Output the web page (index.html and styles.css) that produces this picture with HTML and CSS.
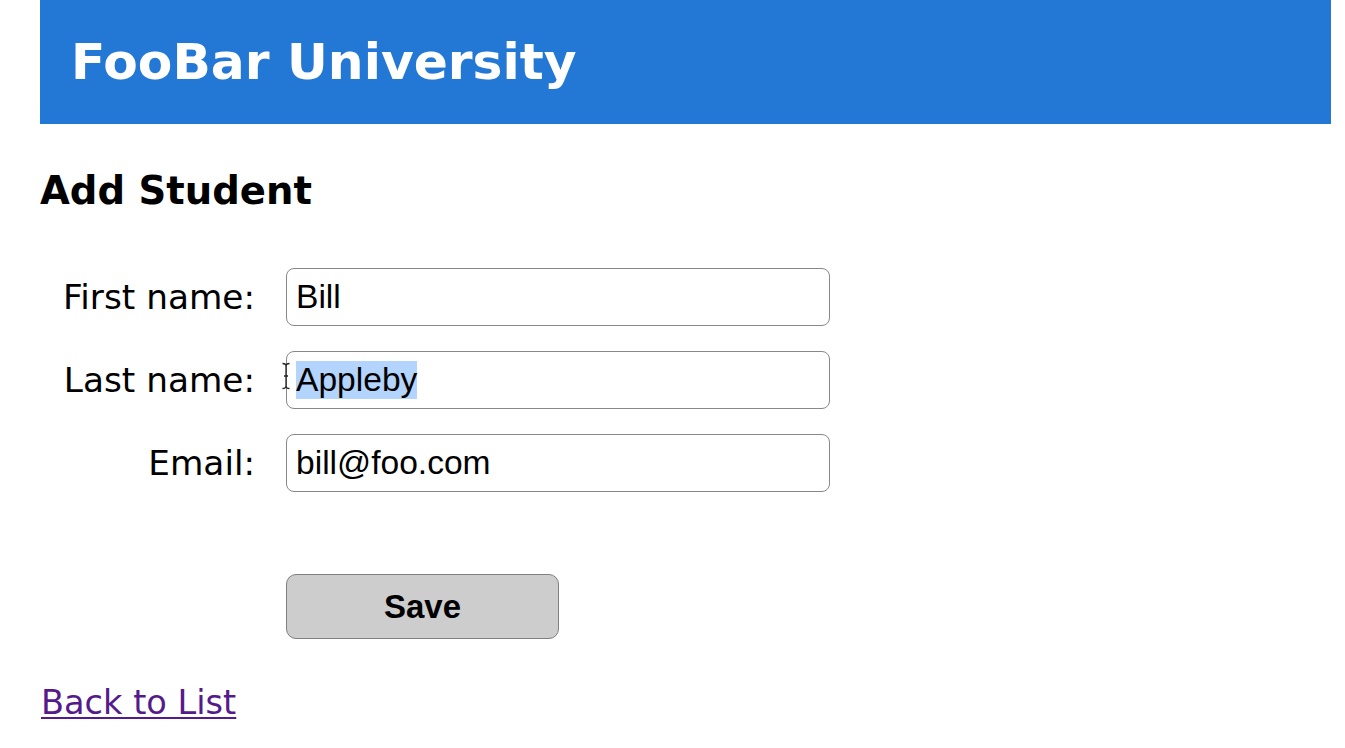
FILE: index.html
```html
<!DOCTYPE html>
<html lang="en">
<head>
<meta charset="utf-8">
<title>Add Student - FooBar University</title>
<link rel="stylesheet" href="styles.css">
</head>
<body>
<header class="site-header">
  <h1 class="site-title">FooBar University</h1>
</header>
<main class="content">
  <h2 class="page-title">Add Student</h2>
  <form class="student-form" action="#">
    <label class="field-label" for="firstName">First name:</label>
    <input class="field-input" id="firstName" type="text" value="Bill">

    <label class="field-label" for="lastName">Last name:</label>
    <div class="field-wrap">
      <input class="field-input" id="lastName" type="text" value="Appleby">
      <svg class="ibeam" width="10" height="28" viewBox="0 0 10 28" aria-hidden="true">
        <path d="M1.5 1.5 Q5 1.5 5 4 Q5 1.5 8.5 1.5 M5 4 V24 M1.5 26.5 Q5 26.5 5 24 Q5 26.5 8.5 26.5 M3 14 H7" fill="none" stroke="#222" stroke-width="1.3"/>
      </svg>
    </div>

    <label class="field-label" for="email">Email:</label>
    <input class="field-input" id="email" type="text" value="bill@foo.com">

    <div class="actions">
      <button class="save-btn" type="submit">Save</button>
    </div>
  </form>
  <p class="back"><a class="back-link" href="#">Back to List</a></p>
</main>
<script src="script.js"></script>
</body>
</html>
```

FILE: styles.css
```css
html, body {
  margin: 0;
  padding: 0;
  background: #ffffff;
}

body {
  padding: 0 14px 0 40px;
  font-family: "DejaVu Sans", Verdana, sans-serif;
  color: #000;
}

.site-header {
  background: #2378d5;
  height: 124px;
  padding-left: 31px;
  box-sizing: border-box;
}

.site-title {
  margin: 0;
  font-family: "DejaVu Sans", Verdana, sans-serif;
  font-weight: bold;
  font-size: 50.3px;
  line-height: 124px;
  color: #ffffff;
}

.page-title {
  margin: 45px 0 0 0;
  font-family: "DejaVu Sans", Verdana, sans-serif;
  font-weight: bold;
  font-size: 38.6px;
  line-height: 44px;
}

.student-form {
  margin-top: 55px;
  display: grid;
  grid-template-columns: 213px 544px;
  column-gap: 33px;
  row-gap: 25px;
  align-items: center;
}

.field-label {
  text-align: right;
  font-family: "DejaVu Sans", Verdana, sans-serif;
  font-size: 34.3px;
  margin-right: -2px;
}

.field-wrap {
  position: relative;
}

.field-input {
  display: block;
  box-sizing: border-box;
  width: 544px;
  height: 58px;
  margin: 0;
  padding: 0 10px 0 9px;
  border: 1px solid #888888;
  border-radius: 8px;
  background: #fff;
  font-family: "Liberation Sans", Arial, sans-serif;
  font-size: 33.6px;
  color: #000;
  outline: none;
}

.field-input::selection {
  background: #b3d4fc;
  color: #000;
}

.ibeam {
  position: absolute;
  left: -5px;
  top: 11px;
}

.actions {
  grid-column: 2;
  margin-top: 57px;
}

.save-btn {
  display: block;
  box-sizing: border-box;
  width: 273px;
  height: 65px;
  margin: 0;
  border: 1px solid #808080;
  border-radius: 10px;
  background: #cdcdcd;
  font-family: "Liberation Sans", Arial, sans-serif;
  font-weight: bold;
  font-size: 33px;
  color: #000;
}

.back {
  margin: 44px 0 0 1px;
  font-size: 33.6px;
}

.back-link {
  color: #551a8b;
  text-decoration: underline;
  text-decoration-thickness: 2px;
  text-underline-offset: 3px;
}
```

FILE: script.js
```js
var last = document.getElementById('lastName');
last.focus();
last.setSelectionRange(0, last.value.length);
```
